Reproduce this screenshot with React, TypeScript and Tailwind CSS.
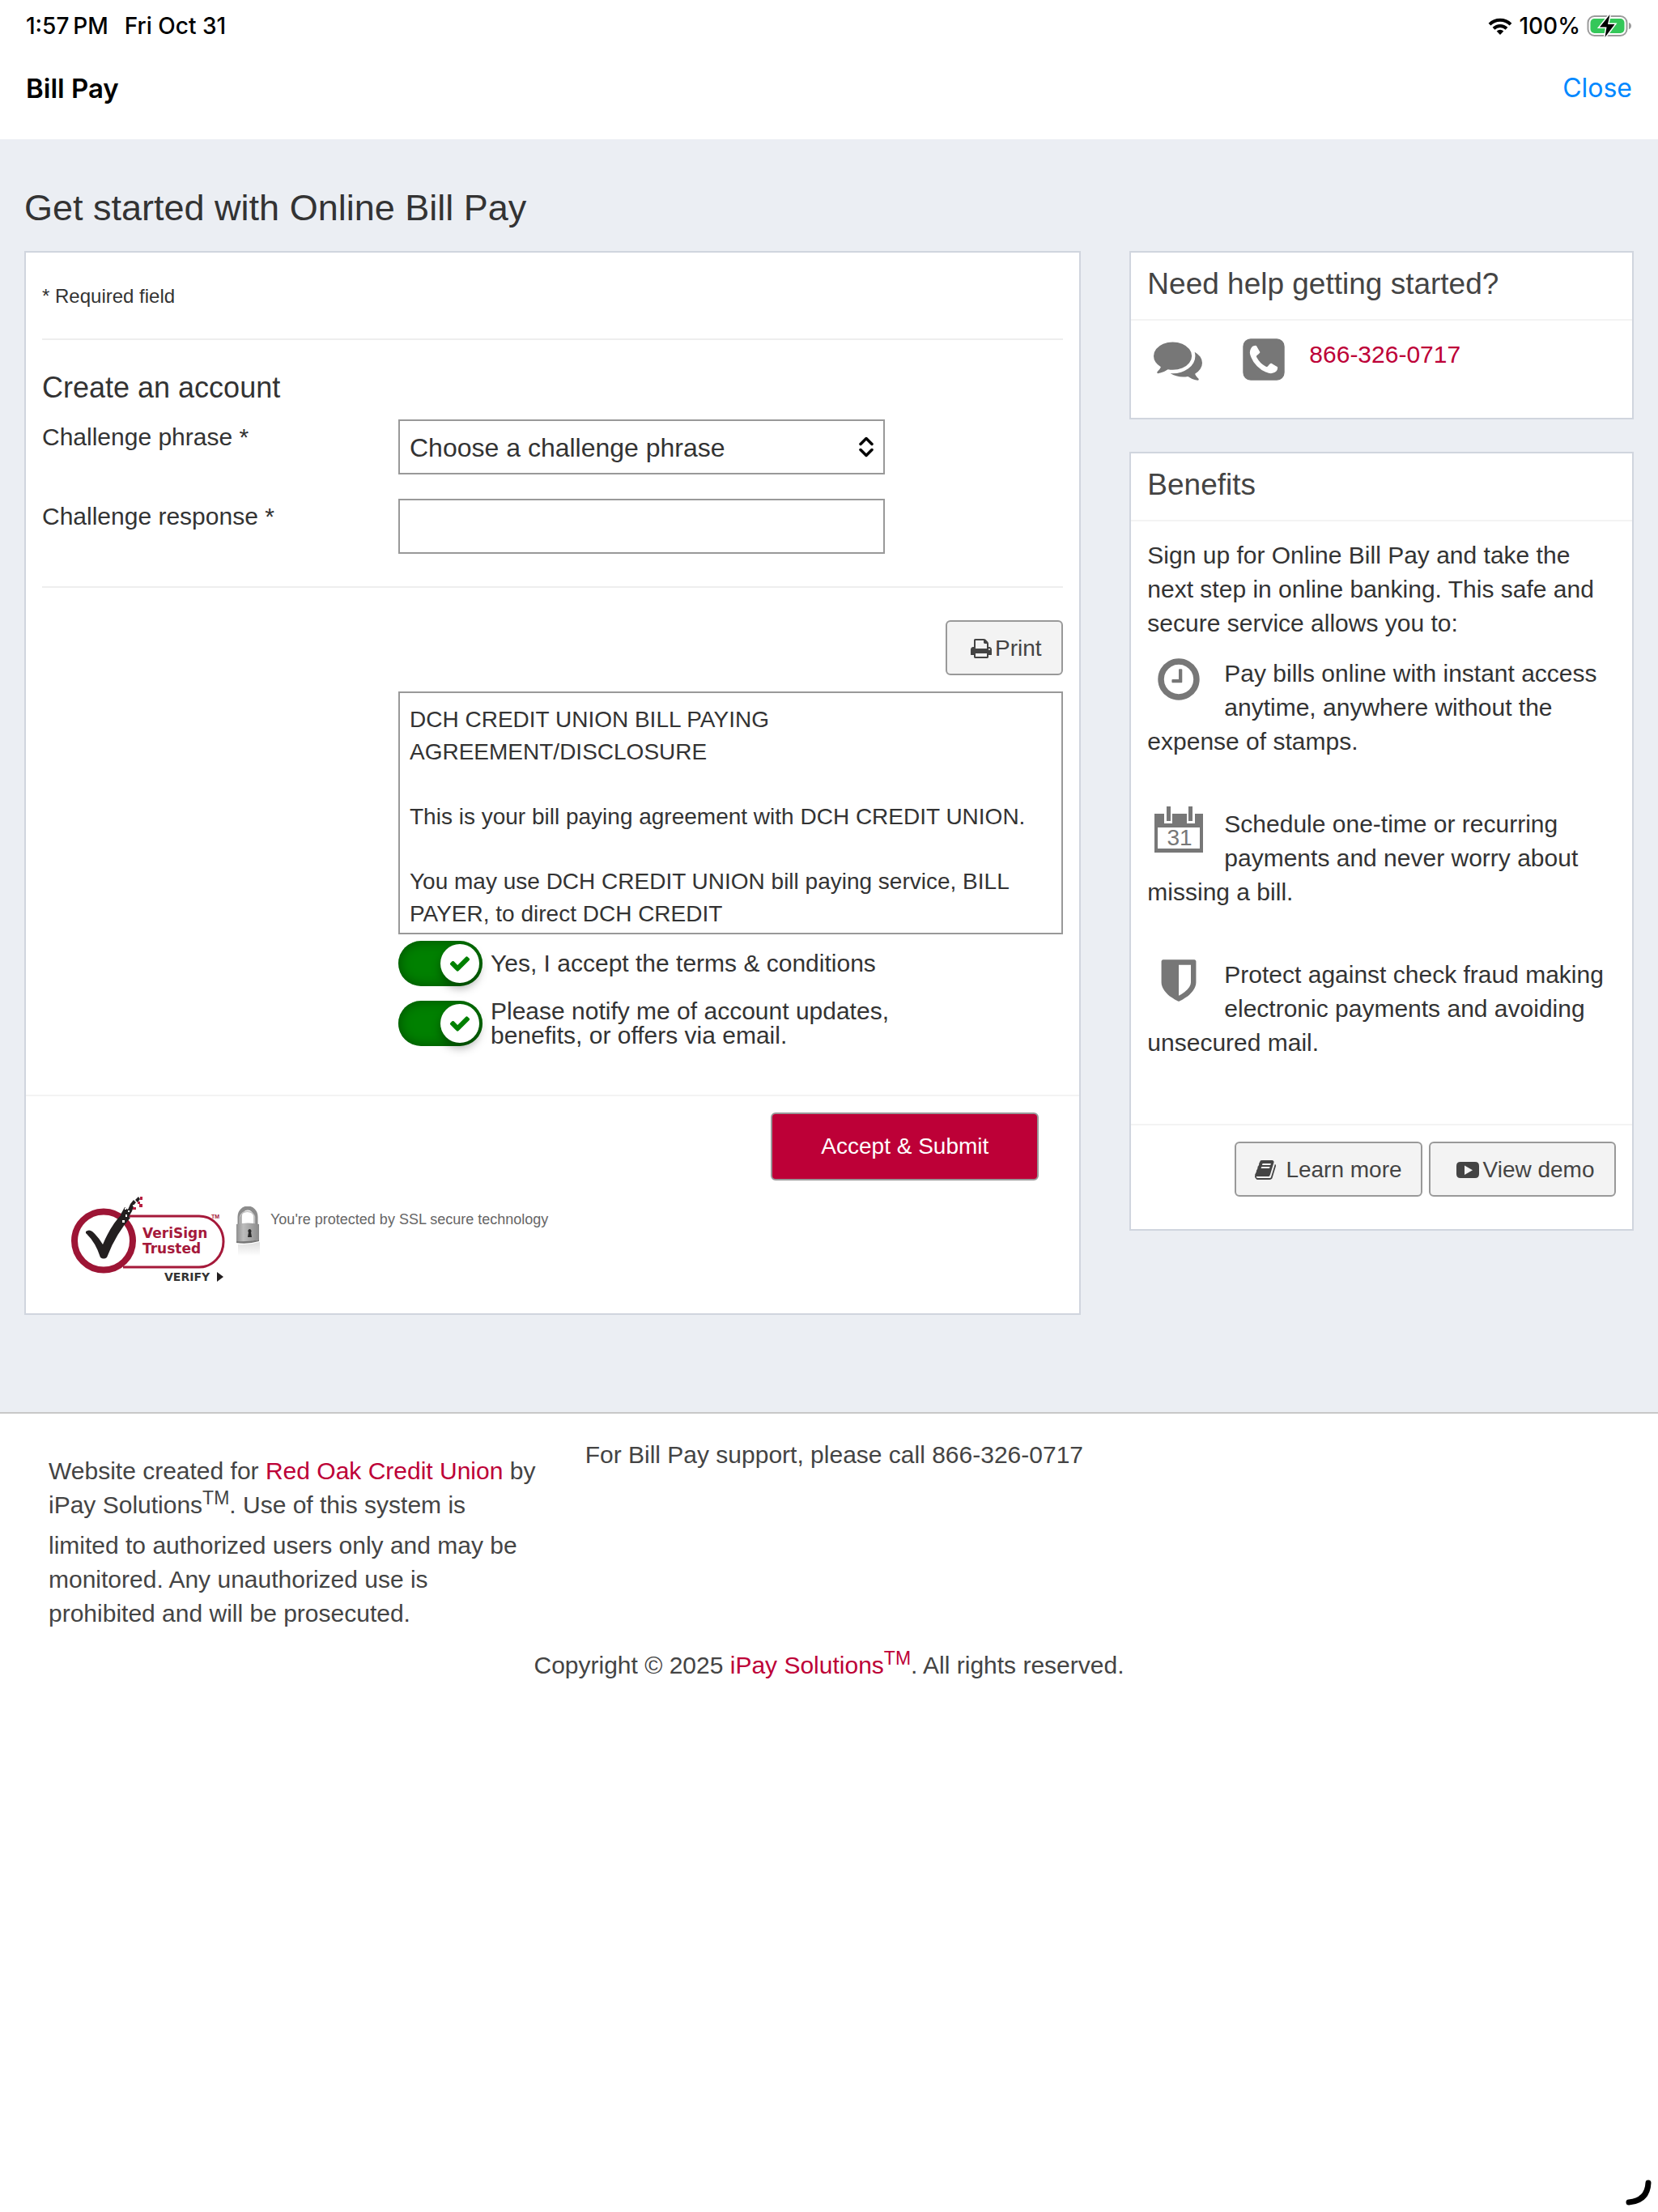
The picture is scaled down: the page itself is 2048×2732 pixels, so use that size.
import React from 'react'

interface IconProps {
  path: string
  viewBox?: string
  className?: string
}

const ICONS = {
  comments:
    'M1408 768q0 139-94 257t-256.5 186.5-353.5 68.5q-86 0-176-16-124 88-278 128-36 9-86 16h-3q-11 0-20.5-8t-11.5-21q-1-3-1-6.5t.5-6.5 2-6l2.5-5 3.5-5.5 4-5 4.5-5 4-4.5q5-6 23-25t26-29.5 22.5-29 25-38.5 20.5-44q-124-72-195-177t-71-224q0-139 94-257t256.5-186.5 353.5-68.5 353.5 68.5 256.5 186.5 94 257zM1792 1024q0 120-71 224.5t-195 176.5q10 24 20.5 44t25 38.5 22.5 29 26 29.5 23 25q1 1 4 4.5t4.5 5 4 5 3.5 5.5l2.5 5 2 6 .5 6.5-1 6.5q-3 14-13 22t-22 7q-50-7-86-16-154-40-278-128-90 16-176 16-271 0-472-132 58 4 88 4 161 0 309-45t264-129q125-92 192-212t67-254q0-77-23-152 129 71 204 178t75 230z',
  phoneSquare:
    'M1408 1193q0-11-2-16-3-8-38.5-29.5t-88.5-49.5l-53-29q-5-3-19-13t-25-15-21-5q-18 0-47 32.5t-57 65.5-44 33q-7 0-16.5-3.5t-15.5-6.5-17-9.5-14-8.5q-99-55-170.5-126.5t-126.5-170.5q-2-3-8.5-14t-9.5-17-6.5-15.5-3.5-16.5q0-13 20.5-33.5t45-38.5 45-39.5 20.5-36.5q0-10-5-21t-15-25-13-19q-3-6-15-28.5t-25-45.5-26.5-47.5-25-40.5-16.5-18-16-2q-48 0-101 22-46 21-80 94.5t-34 130.5q0 16 2.5 34t5 30.5 9 33 10 29.5 12.5 33 11 30q60 164 216.5 320.5t320.5 216.5q6 2 30 11t33 12.5 29.5 10 33 9 30.5 5 34 2.5q57 0 130.5-34t94.5-80q22-53 22-101zM1664 416v960q0 119-84.5 203.5t-203.5 84.5h-960q-119 0-203.5-84.5t-84.5-203.5v-960q0-119 84.5-203.5t203.5-84.5h960q119 0 203.5 84.5t84.5 203.5z',
  clock:
    'M1024 544v448q0 14-9 23t-23 9h-320q-14 0-23-9t-9-23v-64q0-14 9-23t23-9h224v-352q0-14 9-23t23-9h64q14 0 23 9t9 23zm416 352q0-148-73-273t-198-198-273-73-273 73-198 198-73 273 73 273 198 198 273 73 273-73 198-198 73-273zm224 0q0 209-103 385.5t-279.5 279.5-385.5 103-385.5-103-279.5-279.5-103-385.5 103-385.5 279.5-279.5 385.5-103 385.5 103 279.5 279.5 103 385.5z',
  shield:
    'M1344 960v-640h-448v1137q119-63 213-137 235-184 235-360zm192-768v768q0 86-33.5 170.5t-83 150-118 127.5-126.5 103-121 77.5-89.5 49.5-42.5 20q-12 6-26 6t-26-6q-16-7-42.5-20t-89.5-49.5-121-77.5-126.5-103-118-127.5-83-150-33.5-170.5v-768q0-26 19-45t45-19h1152q26 0 45 19t19 45z',
  print:
    'M384 1536h896v-256h-896v256zm0-640h896v-384h-160q-40 0-68-28t-28-68v-160h-640v640zm1152 64q0-26-19-45t-45-19-45 19-19 45 19 45 45 19 45-19 19-45zm128 0v416q0 13-9.5 22.5t-22.5 9.5h-224v160q0 40-28 68t-68 28h-960q-40 0-68-28t-28-68v-160h-224q-13 0-22.5-9.5t-9.5-22.5v-416q0-79 56.5-135.5t135.5-56.5h64v-544q0-40 28-68t68-28h672q40 0 88 20t76 48l152 152q28 28 48 76t20 88v256h64q79 0 135.5 56.5t56.5 135.5z',
  book:
    'M1639 478q40 57 18 129l-275 906q-19 64-76.5 107.5t-122.5 43.5h-923q-77 0-148.5-53.5t-99.5-131.5q-24-67-2-127 0-4 3-27t4-37q1-8-3-21.5t-3-19.5q2-11 8-21t16.5-23.5 16.5-23.5q23-38 45-91.5t30-91.5q3-10 .5-30t-.5-28q3-11 17-28t17-23q21-36 42-92t25-90q1-9-2.5-32t.5-28q4-13 22-30.5t22-22.5q19-26 42.5-84.5t27.5-96.5q1-8-3-25.5t-2-26.5q2-8 9-18t18-23 17-21q8-12 16.5-30.5t15-35 16-36 19.5-32 26.5-23.5 36-11.5 47.5 5.5l-1 3q38-9 51-9h761q74 0 114 56t18 130l-274 906q-36 119-71.5 153.5t-128.5 34.5h-869q-27 0-38 15-11 16-1 43 24 70 144 70h923q29 0 56-15.5t35-41.5l300-987q7-22 5-57 38 15 59 43zm-1064 2q-4 13 2 22.5t20 9.5h608q13 0 25.5-9.5t16.5-22.5l21-64q4-13-2-22.5t-20-9.5h-608q-13 0-25.5 9.5t-16.5 22.5zm-83 256q-4 13 2 22.5t20 9.5h608q13 0 25.5-9.5t16.5-22.5l21-64q4-13-2-22.5t-20-9.5h-608q-13 0-25.5 9.5t-16.5 22.5z',
  check:
    'M1671 566q0 40-28 68l-724 724-136 136q-28 28-68 28t-68-28l-136-136-362-362q-28-28-28-68t28-68l136-136q28-28 68-28t68 28l294 295 656-657q28-28 68-28t68 28l136 136q28 28 28 68z',
}

const Icon: React.FC<IconProps> = ({ path, viewBox = '0 0 1792 1792', className }) => (
  <svg viewBox={viewBox} className={className} fill="currentColor" aria-hidden="true">
    <path d={path} />
  </svg>
)

const CalendarIcon: React.FC = () => (
  <svg viewBox="0 0 60 60" className="mx-auto h-[60px] w-[60px]" aria-hidden="true">
    <path
      fill="currentColor"
      fillRule="evenodd"
      d="M0 10h12v12h10V10h18v12h10V10h10v48H0zM4 27v26h52V27z"
    />
    <path fill="currentColor" d="M15 1h5v18h-5zM42 1h5v18h-5z" />
    <text x="31" y="49" textAnchor="middle" fontSize="28" fill="currentColor">
      31
    </text>
  </svg>
)

const WifiIcon: React.FC = () => (
  <svg viewBox="0 0 30 21" className="h-[21px] w-[30px]" fill="none" stroke="#000" strokeWidth="4" aria-hidden="true">
    <path d="M2 8.2a18.5 18.5 0 0 1 26 0" />
    <path d="M7 13.2a11.5 11.5 0 0 1 16 0" />
    <path d="M15 21l-4.3-4.4a6.2 6.2 0 0 1 8.6 0z" fill="#000" stroke="none" />
  </svg>
)

const BatteryIcon: React.FC = () => (
  <svg viewBox="0 0 56 28" className="h-7 w-14" aria-hidden="true">
    <rect x="1.5" y="2" width="48" height="24" rx="8" fill="none" stroke="#9b9b9b" strokeWidth="2" />
    <rect x="4.5" y="5" width="42" height="18" rx="5" fill="#34c759" />
    <path d="M52 10c4 1 4 7 0 8z" fill="#9b9b9b" />
    <path d="M28.5 0L16 15.5h8.500L22.500 28 34.500 12h-8.500z" fill="#000" stroke="#fff" strokeWidth="3" paintOrder="stroke" />
  </svg>
)

const VeriSignLogo: React.FC = () => (
  <svg viewBox="0 0 190 106" className="h-[106px] w-[190px]" role="img" aria-label="VeriSign Trusted">
    <path d="M66 24h92a30 31.5 0 0 1 0 63H64" fill="none" stroke="#a5193a" strokeWidth="3" />
    <circle cx="40" cy="54.5" r="36" fill="#fff" stroke="#9d1535" strokeWidth="8" />
    <path d="M18 43q4-3 8 0 7 6 13 16 10-24 24-38l10 5q-18 20-29 49-4 3-8 0-6-19-18-30z" fill="#231f20" />
    <path d="M61 22l5-9 4 3 3-7 4 3-2 6-4 7-4 3zM73 9l4-5 3 3-4 5zM79 4l4-4 2 3-3 4z" fill="#231f20" />
    <path d="M63 29h3v3h-3zM67 22h2v3h-2zM70 17h2v2h-2zM66 14h2v2h-2zM76 10h2v2h-2z" fill="#fff" />
    <path d="M85 0h3v4h-3zM84 9h4v4h-4zM76 13h4v3h-4zM82 6h3v3h-3z" fill="#b51f42" />
    <text x="88" y="51" fontFamily="DejaVu Sans" fontWeight="700" fontSize="17" fill="#a5193a">
      VeriSign
    </text>
    <text x="88" y="70" fontFamily="DejaVu Sans" fontWeight="700" fontSize="17" fill="#a5193a">
      Trusted
    </text>
    <text x="173" y="27" fontWeight="700" fontSize="7" fill="#a5193a">
      TM
    </text>
    <text x="115" y="104" fontFamily="DejaVu Sans" fontWeight="700" fontSize="14" fill="#333">
      VERIFY
    </text>
    <path d="M180 93l8 6-8 6z" fill="#231f20" />
  </svg>
)

const LockIcon: React.FC = () => (
  <svg viewBox="0 0 30 62" className="h-[62px] w-[30px]" aria-hidden="true">
    <defs>
      <linearGradient id="lockBody" x1="0" x2="1">
        <stop offset="0" stopColor="#8f8f8f" />
        <stop offset="0.3" stopColor="#bdbdbd" />
        <stop offset="1" stopColor="#8a8a8a" />
      </linearGradient>
      <linearGradient id="lockFade" x1="0" x2="0" y1="0" y2="1">
        <stop offset="0" stopColor="#d0d0d0" />
        <stop offset="1" stopColor="#fff" />
      </linearGradient>
    </defs>
    <path d="M4 24V13a10 11 0 0 1 20 0v11" fill="none" stroke="#8c8c8c" strokeWidth="5" />
    <path d="M4.5 24V13a9.5 10 0 0 1 18 0v11" fill="none" stroke="#c4c4c4" strokeWidth="1.5" />
    <path d="M0 22q14-3 28 0v19q-14 4-28 3z" fill="url(#lockBody)" />
    <path d="M0 43q14 1 28-2v2q-14 4-28 2z" fill="#777" />
    <path d="M16 28a2.5 2.5 0 0 1 2 4l1 6h-5l1-6a2.5 2.5 0 0 1 1-4z" fill="#2b2b2b" />
    <path d="M2 47q13 1 27-3v17H2z" fill="url(#lockFade)" opacity="0.7" />
  </svg>
)

const buttonClass =
  'flex h-[68px] items-center justify-center rounded-md border-2 border-[#999] bg-[#f3f3f3] pt-0.5 text-[28px] leading-10 text-[#444]'

const Toggle: React.FC<{ id: string; label: string }> = ({ id, label }) => (
  <div className="flex items-center gap-2.5">
    <span className="relative h-14 w-[104px] shrink-0">
      <input
        id={id}
        type="checkbox"
        defaultChecked
        className="block h-14 w-[104px] appearance-none rounded-full bg-[#008000] shadow-[inset_0_0_16px_rgba(0,0,0,0.4)]"
      />
      <span className="pointer-events-none absolute top-1 right-1 flex h-12 w-12 items-center justify-center rounded-full bg-white shadow-[0_6px_12px_rgba(0,0,0,0.35)]">
        <Icon path={ICONS.check} className="h-7 w-7 text-[#008000]" />
      </span>
    </span>
    <label htmlFor={id} className="max-w-[520px] text-[30px] leading-[30px]">
      {label}
    </label>
  </div>
)

const AGREEMENT = `DCH CREDIT UNION BILL PAYING AGREEMENT/DISCLOSURE

This is your bill paying agreement with DCH CREDIT UNION.

You may use DCH CREDIT UNION bill paying service, BILL PAYER, to direct DCH CREDIT`

const StatusBar: React.FC = () => (
  <div className="flex h-16 items-center justify-between px-8 font-[Inter] text-[28px] leading-8 font-medium text-black">
    <div className="flex gap-5">
      <span>1:57&#8201;PM</span>
      <span>Fri Oct 31</span>
    </div>
    <div className="flex items-center">
      <WifiIcon />
      <span className="mx-2">100%</span>
      <BatteryIcon />
    </div>
  </div>
)

const EnrollForm: React.FC = () => (
  <form className="col-span-2 border-2 border-[#d0d5de] bg-white" onSubmit={(e) => e.preventDefault()}>
    <div className="px-5 pb-[58px]">
      <div className="flex h-[108px] items-center border-b-2 border-[#eee] pt-0.5 text-2xl">* Required field</div>

      <div className="border-b-2 border-[#eee] pt-[38px] pb-10">
        <h2 className="mb-[18px] text-4xl leading-[42px]">Create an account</h2>
        <div className="mb-[30px] flex items-start">
          <label htmlFor="phrase" className="w-[440px] shrink-0 pt-px">
            Challenge phrase *
          </label>
          <div className="relative w-[601px]">
            <select
              id="phrase"
              className="block h-[68px] w-full appearance-none border-2 border-[#999] bg-white px-3 pt-0.5 text-[32px] leading-10"
            >
              <option>Choose a challenge phrase</option>
            </select>
            <svg
              viewBox="0 0 18 26"
              className="pointer-events-none absolute top-[21px] right-3.5 h-[26px] w-[18px]"
              fill="none"
              stroke="#000"
              strokeWidth="3.5"
              strokeLinecap="round"
              strokeLinejoin="round"
            >
              <path d="M2 9.500l7-7 7 7M2 16.500l7 7 7-7" />
            </svg>
          </div>
        </div>
        <div className="flex items-start">
          <label htmlFor="response" className="w-[440px] shrink-0 pt-px">
            Challenge response *
          </label>
          <input id="response" type="text" className="block h-[68px] w-[601px] border-2 border-[#999] bg-white px-3 text-[32px]" />
        </div>
      </div>

      <div className="flex flex-col pt-10 pl-[440px]">
        <button type="button" className={`${buttonClass} mb-5 w-[145px] gap-1 self-end pl-1`}>
          <Icon path={ICONS.print} viewBox="0 0 1664 1792" className="h-7 w-[26px]" />
          Print
        </button>
        <textarea
          readOnly
          aria-label="Bill paying agreement"
          defaultValue={AGREEMENT}
          className="mb-2 block h-[300px] w-full resize-none overflow-hidden border-2 border-[#999] bg-white px-3 pt-[13px] text-[28px] leading-10"
        />
        <div className="flex flex-col gap-4">
          <Toggle id="terms" label="Yes, I accept the terms & conditions" />
          <Toggle id="notify" label="Please notify me of account updates, benefits, or offers via email." />
        </div>
      </div>
    </div>

    <div className="flex flex-col border-t-2 border-[#f3f3f3] pt-5 pr-[50px] pb-[38px] pl-14">
      <button
        type="submit"
        className="h-[84px] w-[331px] self-end rounded-md border-2 border-[#999] bg-[#bd0037] text-[28px] leading-10 text-white"
      >
        Accept &amp; Submit
      </button>
      <div className="mt-5 flex items-start">
        <VeriSignLogo />
        <div className="mt-3 ml-3.5 flex items-start gap-3">
          <LockIcon />
          <span className="mt-1 text-lg leading-6 text-[#666]">You're protected by SSL secure technology</span>
        </div>
      </div>
    </div>
  </form>
)

const benefits: { icon: React.ReactNode; text: string }[] = [
  {
    icon: <Icon path={ICONS.clock} className="mx-auto h-[60px] w-[60px]" />,
    text: 'Pay bills online with instant access anytime, anywhere without the expense of stamps.',
  },
  {
    icon: <CalendarIcon />,
    text: 'Schedule one-time or recurring payments and never worry about missing a bill.',
  },
  {
    icon: <Icon path={ICONS.shield} className="mx-auto h-[60px] w-[60px]" />,
    text: 'Protect against check fraud making electronic payments and avoiding unsecured mail.',
  },
]

const cardTitleClass = 'border-b-2 border-[#f3f3f3] px-5 pt-[18px] pb-[22px] text-[37px] leading-[42px] text-[#444]'

const Sidebar: React.FC = () => (
  <aside className="flex flex-col gap-10">
    <section className="border-2 border-[#d0d5de] bg-white">
      <h2 className={cardTitleClass}>Need help getting started?</h2>
      <div className="flex items-start px-7 pt-[18px] pb-[42px] text-[#777]">
        <Icon path={ICONS.comments} className="mr-[46px] h-[60px] w-[60px]" />
        <Icon path={ICONS.phoneSquare} className="mr-[26px] h-[60px] w-[60px]" />
        <a href="#call" className="pt-[3px] text-[#bd0037]">
          866-326-0717
        </a>
      </div>
    </section>

    <section className="border-2 border-[#d0d5de] bg-white">
      <h2 className={cardTitleClass}>Benefits</h2>
      <div className="px-5 pt-[21px] pb-[19px]">
        <p className="mb-5">
          Sign up for Online Bill Pay and take the next step in online banking. This safe and secure service allows you to:
        </p>
        <ul>
          {benefits.map((item) => (
            <li key={item.text} className="pb-[60px]">
              <span className="float-left -mt-0.5 mr-[18px] block w-[77px] text-[#777]">{item.icon}</span>
              {item.text}
            </li>
          ))}
        </ul>
      </div>
      <div className="flex justify-end gap-2 border-t-2 border-[#f3f3f3] px-5 pt-5 pb-10">
        <button type="button" className={`${buttonClass} w-[232px] gap-2.5`}>
          <Icon path={ICONS.book} className="h-7 w-7" />
          Learn more
        </button>
        <button type="button" className={`${buttonClass} w-[231px] gap-1 pl-2`}>
          <svg viewBox="0 0 28 20" className="h-5 w-7" aria-hidden="true">
            <path
              fill="currentColor"
              fillRule="evenodd"
              d="M5 0h18q5 0 5 5v10q0 5-5 5H5q-5 0-5-5V5q0-5 5-5zM10 4.500v11.500l10-5.800z"
            />
          </svg>
          View demo
        </button>
      </div>
    </section>
  </aside>
)

const App: React.FC = () => (
  <div className="relative flex min-h-screen flex-col bg-white font-['Liberation_Sans',Arial,sans-serif] text-[30px] leading-[42px] text-[#333]">
    <header className="h-[172px]">
      <StatusBar />
      <div className="flex items-center justify-between px-8 pt-[25px] font-[Inter] text-[32px] leading-10 text-black">
        <h1 className="text-[33px] font-semibold">Bill Pay</h1>
        <button type="button" className="text-[#0088ff]">
          Close
        </button>
      </div>
    </header>

    <main className="bg-[#ebeef3] px-[30px] pt-[55px] pb-[120px]">
      <h2 className="mb-[23px] text-[45px] leading-[60px]">Get started with Online Bill Pay</h2>
      <div className="grid grid-cols-3 items-start gap-[60px]">
        <EnrollForm />
        <Sidebar />
      </div>
    </main>

    <footer className="border-t-2 border-[#c8c8c8] pt-[30px] text-[#444]">
      <div className="grid grid-cols-3 gap-[60px] px-[60px]">
        <div className="pt-5">
          <p>
            Website created for{' '}
            <a href="#union" className="text-[#bd0037]">
              Red Oak Credit Union
            </a>{' '}
            by
            <br />
            iPay Solutions<sup className="text-[23px]">TM</sup>. Use of this system is
          </p>
          <p className="mt-2">
            limited to authorized users only and may be monitored. Any unauthorized use is prohibited and will be prosecuted.
          </p>
        </div>
        <p className="whitespace-nowrap">For Bill Pay support, please call 866-326-0717</p>
      </div>
      <p className="mt-[22px] text-center">
        Copyright © 2025{' '}
        <a href="#ipay" className="text-[#bd0037]">
          iPay Solutions<sup className="text-[23px]">TM</sup>
        </a>
        . All rights reserved.
      </p>
    </footer>

    {/* corner handle of the app window */}
    <svg viewBox="0 0 32 32" className="absolute right-2 bottom-2 h-8 w-8" fill="none" aria-hidden="true">
      <path d="M28 4Q27 26 4 28" stroke="#000" strokeWidth="7" strokeLinecap="round" />
    </svg>
  </div>
)

export default App
